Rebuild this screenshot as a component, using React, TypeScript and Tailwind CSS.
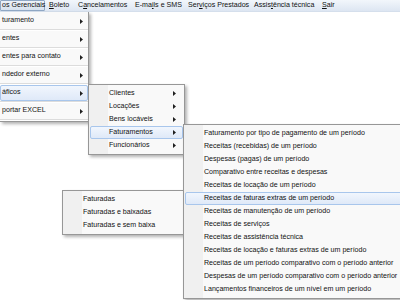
import React from "react";

type Item = { label: string; arrow?: boolean; active?: boolean };

const topItems: Item[] = [
  { label: "turamento", arrow: true },
  { label: "entes", arrow: true },
  { label: "entes para contato", arrow: true },
  { label: "ndedor externo", arrow: true },
  { label: "áficos", arrow: true, active: true },
  { label: "portar EXCEL", arrow: true },
];

const graficos: Item[] = [
  { label: "Clientes", arrow: true },
  { label: "Locações", arrow: true },
  { label: "Bens locáveis", arrow: true },
  { label: "Faturamentos", arrow: true, active: true },
  { label: "Funcionários", arrow: true },
];

const faturamentos: Item[] = [
  { label: "Faturamento por tipo de pagamento de um período" },
  { label: "Receitas (recebidas) de um período" },
  { label: "Despesas (pagas) de um período" },
  { label: "Comparativo entre receitas e despesas" },
  { label: "Receitas de locação de um período" },
  { label: "Receitas de faturas extras de um período", active: true },
  { label: "Receitas de manutenção de um período" },
  { label: "Receitas de serviços" },
  { label: "Receitas de assistência técnica" },
  { label: "Receitas de locação e faturas extras de um período" },
  { label: "Receitas de um período comparativo com o período anterior" },
  { label: "Despesas de um período comparativo com o período anterior" },
  { label: "Lançamentos financeiros de um nível em um período" },
];

const faturadas: Item[] = [
  { label: "Faturadas" },
  { label: "Faturadas e baixadas" },
  { label: "Faturadas e sem baixa" },
];

function Arrow() {
  return (
    <svg width="3" height="5" viewBox="0 0 3 5" className="shrink-0">
      <path d="M0 0L3 2.5L0 5Z" fill="#1f1f1f" />
    </svg>
  );
}

// cascading popup with a grey icon gutter, 13px rows
function Popup({ items, className }: { items: Item[]; className: string }) {
  return (
    <div
      className={`absolute border border-[#979797] bg-[#f9f9f9] py-[2px] shadow-[2px_2px_3px_rgba(0,0,0,0.3)] ${className}`}
    >
      <div className="absolute left-0 top-0 bottom-0 w-[19px] bg-[#f0f0f0]" />
      {items.map((it) => (
        <div
          key={it.label}
          className={`relative mx-[1px] flex h-[13px] items-center justify-between rounded-[2px] border pl-[18px] pr-[6px] ${
            it.active
              ? "border-[#a8c6ec] bg-gradient-to-b from-[#f1f6fd] to-[#dfe9f8]"
              : "border-transparent"
          }`}
        >
          <span className="whitespace-nowrap">{it.label}</span>
          {it.arrow && <Arrow />}
        </div>
      ))}
    </div>
  );
}

export default function App() {
  return (
    <div className="relative h-[300px] w-[400px] overflow-hidden bg-white font-['Liberation_Sans',Arial,sans-serif] text-[7.1px] leading-none text-[#111]">
      {/* menu bar */}
      <div className="flex h-[12px] items-center whitespace-nowrap border-b border-[#d5dfec] bg-gradient-to-b from-[#f2f6fb] to-[#dde6f2]">
        <div className="flex h-[11px] w-[45px] shrink-0 items-center rounded-[1px] border border-[#8fa7c4] bg-gradient-to-b from-[#eef3f9] to-[#d6e1ee] pl-[1px]">
          os Gerenciais
        </div>
        <div className="w-[29px] shrink-0 pl-[4px]">
          <u>B</u>oleto
        </div>
        <div className="w-[57px] shrink-0 pl-[4px]">
          C<u>a</u>ncelamentos
        </div>
        <div className="w-[53px] shrink-0 pl-[4px]">
          E-ma<u>i</u>ls e SMS
        </div>
        <div className="w-[66px] shrink-0 pl-[4px]">
          Ser<u>v</u>iços Prestados
        </div>
        <div className="w-[68px] shrink-0 pl-[4px]">
          Assis<u>t</u>ência técnica
        </div>
        <div className="w-[22px] shrink-0 pl-[4px]">
          <u>S</u>air
        </div>
      </div>

      {/* Relatórios Gerenciais dropdown */}
      <div className="absolute left-0 top-[12px] w-[89px] border-r border-b border-[#979797] bg-[#f9f9f9] pt-px shadow-[2px_2px_3px_rgba(0,0,0,0.3)]">
        {topItems.map((it) => (
          <div
            key={it.label}
            className="flex h-[18px] flex-col border-b border-white"
          >
            <div
              className={`flex flex-1 items-center justify-between rounded-[2px] border pl-[1px] pr-[4px] ${
                it.active
                  ? "border-[#a8c6ec] bg-gradient-to-b from-[#f1f6fd] to-[#dfe9f8]"
                  : "border-transparent"
              }`}
            >
              <span className="whitespace-nowrap">{it.label}</span>
              <Arrow />
            </div>
            <div className="h-px bg-[#dcdcdc]" />
          </div>
        ))}
      </div>

      <Popup items={faturadas} className="left-[62px] top-[190px] w-[123px]" />
      <Popup items={graficos} className="left-[88px] top-[84px] w-[97px]" />
      <Popup items={faturamentos} className="left-[183px] top-[124px] w-[240px]" />
    </div>
  );
}
